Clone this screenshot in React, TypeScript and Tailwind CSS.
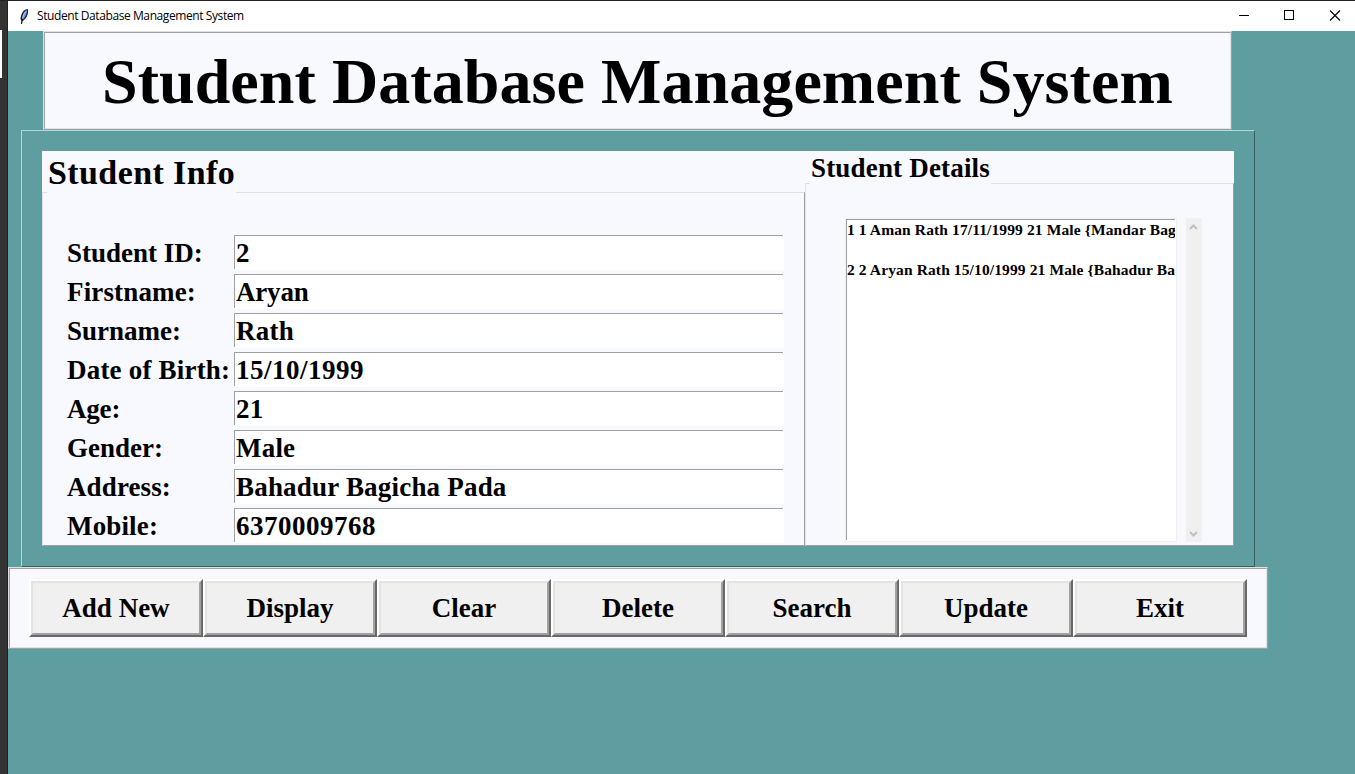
import React from "react";

const fields = [
  { label: "Student ID:", value: "2", ls: "", vs: "" },
  { label: "Firstname:", value: "Aryan", ls: "tracking-[0.15px]", vs: "tracking-[-0.2px]" },
  { label: "Surname:", value: "Rath", ls: "", vs: "tracking-[0.25px]" },
  { label: "Date of Birth:", value: "15/10/1999", ls: "tracking-[0.2px]", vs: "tracking-[0.5px]" },
  { label: "Age:", value: "21", ls: "tracking-[-0.2px]", vs: "tracking-[0.3px]" },
  { label: "Gender:", value: "Male", ls: "", vs: "tracking-[0.2px]" },
  { label: "Address:", value: "Bahadur Bagicha Pada", ls: "tracking-[0.12px]", vs: "tracking-[0.2px]" },
  { label: "Mobile:", value: "6370009768", ls: "tracking-[0.15px]", vs: "tracking-[0.5px]" },
];

const buttons = ["Add New", "Display", "Clear", "Delete", "Search", "Update", "Exit"];

const records = ["1 1 Aman Rath 17/11/1999 21 Male {Mandar Bag", "2 2 Aryan Rath 15/10/1999 21 Male {Bahadur Ba"];

function Feather() {
  return (
    <svg width="10" height="17" viewBox="0 0 10 17" className="block">
      <path d="M9 1 C5 1 2 5 1.5 11 L3 13.5 L5 12 C8 10 9.5 5 9 1Z" fill="#16202c" />
      <path d="M8 2 C5.5 2.5 3.5 6 3 11 L4 11.5 C6.5 9 8.3 5 8 2Z" fill="#5d97dc" />
      <path d="M7 3.5 C5 5.5 4 8 3.5 11" stroke="#b8d4f2" strokeWidth=".9" fill="none" />
      <path d="M3.2 10.5 L2.5 16" stroke="#111" strokeWidth="1.1" fill="none" />
    </svg>
  );
}

function TitleBar() {
  return (
    <div className="flex h-[30px] shrink-0 items-center bg-white">
      <div className="ml-[11px] w-[18px]"><Feather /></div>
      <span className="whitespace-nowrap font-['Open_Sans','Noto_Sans',sans-serif] text-[12px] font-normal leading-[16px] tracking-[-0.41px]">
        Student Database Management System
      </span>
      <svg width="112" height="30" viewBox="0 0 112 30" className="ml-auto" fill="none" stroke="#000" shapeRendering="crispEdges">
        <path d="M0 14.5H10" />
        <rect x="45.5" y="9.5" width="9" height="9" />
        <path d="M91 9.5L101 19.5M101 9.5L91 19.5" strokeWidth="1.1" shapeRendering="auto" />
      </svg>
      <div className="w-[4px]" />
    </div>
  );
}

function Legend({ className, children }: { className: string; children: React.ReactNode }) {
  return <span className={`block whitespace-nowrap bg-[#f8f8ff] ${className}`}>{children}</span>;
}

function StudentInfo() {
  return (
    <section className="flex w-[763px] flex-col bg-[#f8f8ff]">
      <div className="h-[41px] pl-[5px]">
        <Legend className="relative z-10 h-[42px] w-[189px] pl-[1px] text-[34px] leading-[43px] tracking-[0.4px]">Student Info</Legend>
      </div>
      <div className="flex-1 border border-b-[#a0a0a0] border-l-[#e0e0e6] border-r-[#a0a0a0] border-t-[#e0e0e6] pl-[24px] pt-[42px]">
        <div className="flex flex-col gap-[4px]">
          {fields.map((f) => (
            <div key={f.label} className="flex h-[35px] text-[27px] leading-[37px]">
              <label className={`w-[167px] whitespace-nowrap ${f.ls}`}>{f.label}</label>
              <div className="w-[550px] bg-white">
                <div className={`h-[34px] w-[549px] whitespace-nowrap border-l border-t border-[#a0a0a0] pl-[1px] leading-[35px] ${f.vs}`}>
                  {f.value}
                </div>
              </div>
            </div>
          ))}
        </div>
      </div>
    </section>
  );
}

function ScrollBar() {
  return (
    <div className="ml-[9px] flex h-[324px] w-[16px] flex-col items-center justify-between bg-[#f0f0f0] pb-[4px] pr-px pt-[5px]">
      <svg width="9" height="8" viewBox="0 0 9 8" fill="none" stroke="#c0c0c0" strokeWidth="2"><path d="M1 6L4.5 2.5L8 6" /></svg>
      <svg width="9" height="8" viewBox="0 0 9 8" fill="none" stroke="#c0c0c0" strokeWidth="2"><path d="M1 2L4.5 5.5L8 2" /></svg>
    </div>
  );
}

function StudentDetails() {
  return (
    <section className="flex w-[429px] flex-col bg-[#f8f8ff]">
      <div className="h-[32px] pl-[5px]">
        <Legend className="relative z-10 h-[33px] w-[181px] pl-[1px] text-[27px] leading-[35px] tracking-[0.18px]">Student Details</Legend>
      </div>
      <div className="flex flex-1 border border-b-[#a0a0a0] border-l-[#e0e0e6] border-r-[#a0a0a0] border-t-[#e0e0e6] pl-[39px] pt-[34px]">
        <div className="h-[324px] w-[332px] border border-[#f0f0f0] bg-white">
          <div className="h-[321px] w-[329px] overflow-hidden border-l border-t border-[#a0a0a0] text-[15.5px] leading-[20px] tracking-[0.12px]">
            {records.map((r) => (
              <div key={r} className="mb-[20px] whitespace-nowrap">{r}</div>
            ))}
          </div>
        </div>
        <ScrollBar />
      </div>
    </section>
  );
}

function TkButton({ label }: { label: string }) {
  return (
    <button className="h-[58px] w-[174px] border-2 border-b-[#696969] border-l-white border-r-[#696969] border-t-white bg-[#f0f0f0]">
      <span className="flex h-full w-full items-center justify-center border-2 border-b-[#a0a0a0] border-l-[#e3e3e3] border-r-[#a0a0a0] border-t-[#e3e3e3] pt-px text-[27px] font-bold leading-[31px]">
        {label}
      </span>
    </button>
  );
}

export default function App() {
  return (
    <div className="flex h-[774px] w-[1355px] overflow-hidden bg-[#222] pt-px font-['Liberation_Serif',serif] font-bold text-black">
      <div className="w-[8px] shrink-0 border-r border-[#222] bg-[#333] pt-[29px]">
        <div className="h-[48px] w-[2px] bg-white" />
      </div>
      <div className="flex w-[1347px] flex-col bg-[#5f9ea0]">
        <TitleBar />
        <header className="ml-[35px] h-[99px] w-[1189px] shrink-0 border border-b-[#a0a0a0] border-l-[#e0e0e6] border-r-[#a0a0a0] border-t-[#e0e0e6]">
          <div className="h-full border border-b-[#e0e0e6] border-l-[#a0a0a0] border-r-[#e0e0e6] border-t-[#a0a0a0] bg-[#f8f8ff] pl-[57px]">
            <h1 className="whitespace-nowrap text-[64px] leading-[98px] tracking-[0.07px]">Student Database Management System</h1>
          </div>
        </header>
        <main className="ml-[13px] flex h-[437px] w-[1234px] shrink-0 border border-b-[#395e60] border-l-[#a8dcdc] border-r-[#395e60] border-t-[#a8dcdc] p-[20px]">
          <StudentInfo />
          <StudentDetails />
        </main>
        <footer className="h-[82px] w-[1260px] shrink-0 border border-b-[#a0a0a0] border-l-[#e0e0e6] border-r-[#a0a0a0] border-t-[#e0e0e6]">
          <div className="flex h-full border border-b-[#e0e0e6] border-l-[#a0a0a0] border-r-[#e0e0e6] border-t-[#a0a0a0] bg-[#f8f8ff] pl-[19px] pt-[10px]">
            {buttons.map((b) => (
              <TkButton key={b} label={b} />
            ))}
          </div>
        </footer>
      </div>
    </div>
  );
}
